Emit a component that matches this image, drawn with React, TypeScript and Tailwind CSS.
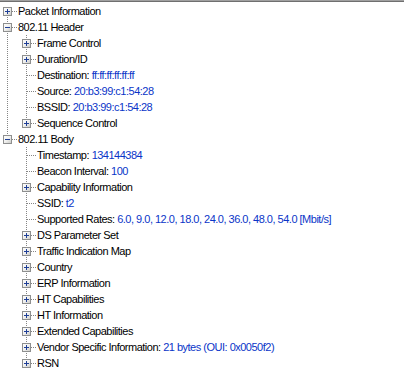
import React from 'react';

type TreeNode = {
  label: string;
  value?: string;
  open?: boolean;
  kids?: TreeNode[];
  more?: boolean; // collapsed node that still has children
};

const tree: TreeNode[] = [
  { label: 'Packet Information', more: true },
  {
    label: '802.11 Header',
    open: true,
    kids: [
      { label: 'Frame Control', more: true },
      { label: 'Duration/ID', more: true },
      { label: 'Destination', value: 'ff:ff:ff:ff:ff:ff' },
      { label: 'Source', value: '20:b3:99:c1:54:28' },
      { label: 'BSSID', value: '20:b3:99:c1:54:28' },
      { label: 'Sequence Control', more: true },
    ],
  },
  {
    label: '802.11 Body',
    open: true,
    kids: [
      { label: 'Timestamp', value: '134144384' },
      { label: 'Beacon Interval', value: '100' },
      { label: 'Capability Information', more: true },
      { label: 'SSID', value: 't2' },
      { label: 'Supported Rates', value: '6.0, 9.0, 12.0, 18.0, 24.0, 36.0, 48.0, 54.0 [Mbit/s]' },
      { label: 'DS Parameter Set', more: true },
      { label: 'Traffic Indication Map', more: true },
      { label: 'Country', more: true },
      { label: 'ERP Information', more: true },
      { label: 'HT Capabilities', more: true },
      { label: 'HT Information', more: true },
      { label: 'Extended Capabilities', more: true },
      { label: 'Vendor Specific Information', value: '21 bytes (OUI: 0x0050f2)', more: true },
      { label: 'RSN', more: true },
    ],
  },
];

// dotted tree lines
const vDots = 'bg-[repeating-linear-gradient(to_bottom,#858585_0,#858585_1px,transparent_1px,transparent_2px)]';
const vDotsOdd = 'bg-[repeating-linear-gradient(to_bottom,transparent_0,transparent_1px,#858585_1px,#858585_2px)]';
const hDots = 'bg-[repeating-linear-gradient(to_right,#858585_0,#858585_1px,transparent_1px,transparent_2px)]';

function Expander({ open }: { open: boolean }) {
  return (
    <svg width="9" height="9" viewBox="0 0 9 9" className="block shrink-0">
      <defs>
        <linearGradient id="xpbox" x1="0" y1="0" x2="1" y2="1">
          <stop offset="0" stopColor="#ffffff" />
          <stop offset="0.5" stopColor="#f0f0ee" />
          <stop offset="1" stopColor="#c8c8c4" />
        </linearGradient>
      </defs>
      <rect x="0.5" y="0.5" width="8" height="8" fill="url(#xpbox)" stroke="#8e8f8f" />
      <rect x="2" y="4" width="5" height="1" fill="#1f3f96" />
      {!open && <rect x="4" y="2" width="1" height="5" fill="#1f3f96" />}
    </svg>
  );
}

type RowProps = {
  node: TreeNode;
  guides: boolean[];
  first: boolean;
  last: boolean;
};

function Row({ node, guides, first, last }: RowProps) {
  const hasBox = node.open || node.more;
  return (
    <div className="flex h-4 whitespace-nowrap">
      {guides.map((g, i) => (
        <div key={i} className="flex h-4 w-[19px] shrink-0 pl-[7px]">
          <div className={`h-4 w-px ${g ? vDots : ''}`} />
        </div>
      ))}

      {hasBox ? (
        <div className="flex h-4 w-[18px] shrink-0 pl-[3px]">
          <div className="flex w-[9px] flex-col items-center">
            <div className={`h-[4px] w-px ${first ? '' : vDots}`} />
            <Expander open={!!node.open} />
            <div className={`h-[3px] w-px ${last ? '' : vDotsOdd}`} />
          </div>
          <div className={`h-px w-[6px] self-center ${hDots}`} />
        </div>
      ) : (
        <div className="flex h-4 w-[18px] shrink-0 pl-[7px]">
          <div className="flex w-px flex-col">
            <div className={`h-2 w-px ${first ? '' : vDots}`} />
            <div className={`h-2 w-px ${last ? '' : vDots}`} />
          </div>
          <div className={`h-px w-[10px] self-center ${hDots}`} />
        </div>
      )}

      <span className="text-black">
        {node.label}
        {node.value !== undefined && (
          <>
            {': '}
            <span className="text-[#0a35c8]">{node.value}</span>
          </>
        )}
      </span>
    </div>
  );
}

function renderTree(nodes: TreeNode[], guides: boolean[], root: boolean): React.ReactNode[] {
  const out: React.ReactNode[] = [];
  nodes.forEach((n, i) => {
    const last = i === nodes.length - 1;
    out.push(
      <Row
        key={guides.length + '-' + i + n.label}
        node={n}
        guides={guides}
        first={root && i === 0}
        last={last}
      />
    );
    if (n.open && n.kids) {
      out.push(...renderTree(n.kids, [...guides, !last], false));
    }
  });
  return out;
}

export default function App() {
  return (
    <div className="h-[379px] w-[404px] overflow-hidden bg-white">
      <div className="h-[2px] border-t border-[#a0a0a0] bg-[#6f6f6f]" />
      <div
        className="pt-px text-[11px] leading-4 tracking-[-0.5px]"
        style={{ fontFamily: '"Liberation Sans", Arial, sans-serif' }}
      >
        {renderTree(tree, [], true)}
      </div>
    </div>
  );
}
